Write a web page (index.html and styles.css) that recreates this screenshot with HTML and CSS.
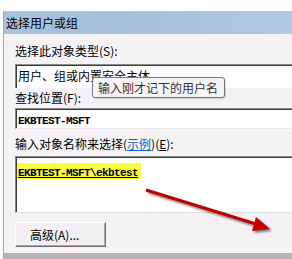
FILE: index.html
```html
<!DOCTYPE html>
<html>
<head>
<meta charset="utf-8">
<link rel="stylesheet" href="styles.css">
</head>
<body>
<div class="page">
  <div class="window">
    <div class="titlebar">选择用户或组</div>
    <div class="content">
      <div class="label l1">选择此对象类型(S):</div>
      <div class="box box1">用户、组或内置安全主体</div>
      <div class="label l2">查找位置(F):</div>
      <div class="box box2"><span class="mono">EKBTEST-MSFT</span></div>
      <div class="label l3">输入对象名称来选择(<span class="link">示例</span>)(<span class="ul">E</span>):</div>
      <div class="box area"><span class="hl"><span class="mono u">EKBTEST-MSFT\ekbtest</span></span></div>
      <div class="btn">高级(A)...</div>
    </div>
    <div class="bottombar"></div>
  </div>
  <div class="tooltip">输入刚才记下的用户名</div>
  <svg class="arrow" width="292" height="259" viewBox="0 0 292 259">
    <defs>
      <filter id="sh" x="-20%" y="-20%" width="140%" height="140%">
        <feGaussianBlur in="SourceAlpha" stdDeviation="1.2"/>
        <feOffset dx="2" dy="2" result="b"/>
        <feComponentTransfer><feFuncA type="linear" slope="0.5"/></feComponentTransfer>
        <feMerge><feMergeNode/><feMergeNode in="SourceGraphic"/></feMerge>
      </filter>
    </defs>
    <g filter="url(#sh)">
      <line x1="146" y1="190" x2="256" y2="224" stroke="#c00000" stroke-width="3"/>
      <polygon points="270,229 252,231 256,217" fill="#c00000"/>
    </g>
  </svg>
</div>
</body>
</html>
```
FILE: styles.css
```css
html, body {
  margin: 0;
  padding: 0;
  background: #ffffff;
}
.page {
  position: relative;
  width: 292px;
  height: 259px;
  overflow: hidden;
  padding-top: 11px;
  box-sizing: border-box;
  font-family: "Noto Sans CJK SC", "Noto Sans", sans-serif;
  font-size: 12px;
  color: #000;
}
.window {
  margin-left: 3px;
  height: 248px;
  border-left: 1px solid #a8a8a8;
  border-top: 1px solid #c4c4c4;
  background: #f5f2f5;
  display: flex;
  flex-direction: column;
  box-sizing: border-box;
}
.titlebar {
  height: 22px;
  line-height: 22px;
  padding-left: 2px;
  background: linear-gradient(to right, #a8c2de 0%, #a4bfdc 40%, #aac3df 70%, #b2cae4 100%);
  font-size: 12px;
}
.content {
  padding: 10px 0 0 11px;
  flex: 1;
}
.label {
  line-height: 14px;
  height: 14px;
  white-space: nowrap;
}
.l1 { margin-top: 0; }
.l2 { margin-top: 3px; }
.l3 { margin-top: 8px; }
.box {
  width: 300px;
  background: #ffffff;
  border-top: 1px solid #8a8a8a;
  border-left: 1px solid #8a8a8a;
  box-shadow: inset 1px 1px 0 #3c3c3c;
  box-sizing: border-box;
  padding-left: 2px;
  white-space: nowrap;
}
.box1 {
  margin-top: 6px;
  height: 24px;
  line-height: 22px;
}
.box2 {
  margin-top: 3px;
  height: 21px;
  line-height: 20px;
  border-bottom: 1px solid #e6e6e6;
}
.area {
  margin-top: 5px;
  height: 57px;
  padding-top: 5px;
  padding-left: 1px;
  border-bottom: 1px solid #dcdcdc;
}
.mono {
  font-family: "Liberation Mono", monospace;
  font-size: 11px;
  font-weight: bold;
  letter-spacing: -0.6px;
}
.u { text-decoration: underline; }
.hl {
  display: inline-block;
  background: #fbfb3c;
  height: 16px;
  line-height: 16px;
  padding: 0 3px 0 1px;
}
.link {
  color: #1060c0;
  text-decoration: underline;
}
.ul { text-decoration: underline; }
.btn {
  margin-top: 9px;
  width: 91px;
  height: 25px;
  line-height: 23px;
  box-sizing: border-box;
  border-top: 1px solid #ffffff;
  border-left: 1px solid #ffffff;
  border-right: 1px solid #6e6e6e;
  border-bottom: 1px solid #6e6e6e;
  box-shadow: inset -1px -1px 0 #a8a8a8, 0 0 0 0 #000;
  background: #f2eff2;
  padding-left: 14px;
}
.bottombar {
  height: 6px;
  background: #b4b4b4;
}
.tooltip {
  position: absolute;
  left: 92px;
  top: 77px;
  width: 133px;
  height: 21px;
  box-sizing: border-box;
  border: 1px solid #787878;
  border-radius: 3px;
  background: #f6f4f6;
  line-height: 19px;
  padding-left: 5px;
  color: #333;
  white-space: nowrap;
  box-shadow: 1px 1px 1px rgba(0,0,0,0.15);
}
.arrow {
  position: absolute;
  left: 0;
  top: 0;
}
```
